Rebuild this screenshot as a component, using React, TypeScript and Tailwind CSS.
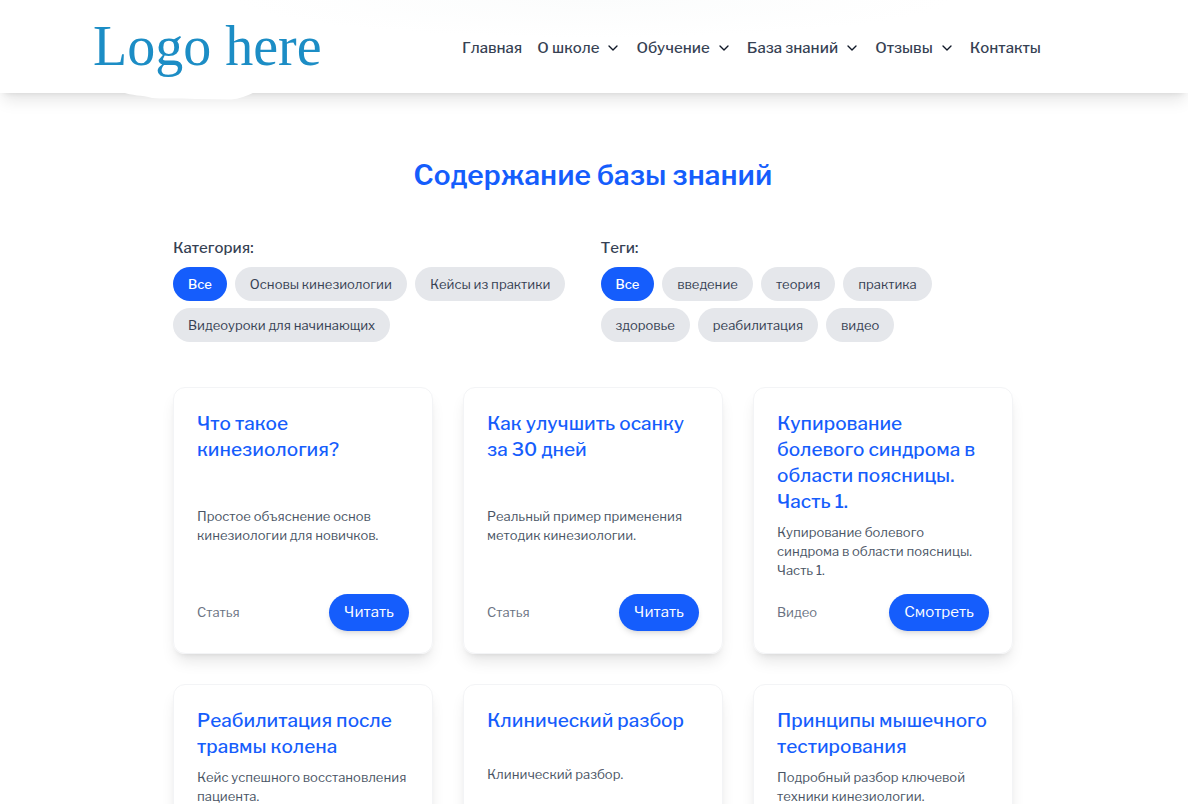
import React from "react";
import { ChevronDown } from "lucide-react";

const nav = [
  { label: "Главная", menu: false },
  { label: "О школе", menu: true },
  { label: "Обучение", menu: true },
  { label: "База знаний", menu: true },
  { label: "Отзывы", menu: true },
  { label: "Контакты", menu: false },
];

const categories = ["Все", "Основы кинезиологии", "Кейсы из практики", "Видеоуроки для начинающих"];
const tags = ["Все", "введение", "теория", "практика", "здоровье", "реабилитация", "видео"];

const cards = [
  { title: "Что такое кинезиология?", text: "Простое объяснение основ кинезиологии для новичков.", kind: "Статья", action: "Читать" },
  { title: "Как улучшить осанку за 30 дней", text: "Реальный пример применения методик кинезиологии.", kind: "Статья", action: "Читать" },
  { title: "Купирование болевого синдрома в области поясницы. Часть 1.", text: "Купирование болевого синдрома в области поясницы. Часть 1.", kind: "Видео", action: "Смотреть" },
  { title: "Реабилитация после травмы колена", text: "Кейс успешного восстановления пациента.", kind: "Статья", action: "Читать" },
  { title: "Клинический разбор", text: "Клинический разбор.", kind: "Видео", action: "Смотреть" },
  { title: "Принципы мышечного тестирования", text: "Подробный разбор ключевой техники кинезиологии.", kind: "Статья", action: "Читать" },
];

function Filter({ title, items }: { title: string; items: string[] }) {
  return (
    <div>
      <h2 className="mb-[7px] text-[15px] leading-6 font-medium text-gray-700">{title}</h2>
      <div className="flex flex-wrap gap-x-2 gap-y-[7px]">
        {items.map((item, i) => (
          <button
            key={item}
            className={
              i === 0
                ? "rounded-full bg-[#155dfc] px-[15px] py-[7px] text-[13px] leading-5 font-medium text-white"
                : "rounded-full bg-gray-200 px-[15px] py-[7px] text-[13px] leading-5 text-gray-700"
            }
          >
            {item}
          </button>
        ))}
      </div>
    </div>
  );
}

export default function App() {
  return (
    <div className="h-screen overflow-x-hidden overflow-y-auto bg-white font-['Libre_Franklin','Inter',sans-serif] [scrollbar-width:none]">
      <header className="relative flex h-[93px] items-center bg-white bg-[radial-gradient(ellipse_30%_40%_at_50%_0%,#fbfcfc,#ffffff)] pl-[93px] shadow-lg">
        <svg className="absolute top-[92px] left-[122px]" width="134" height="9" viewBox="0 0 134 9" aria-hidden="true">
          <path d="M0 0 C10 4 20 3 30 6 C38 7 55 6 74 7 L109 7.5 C117 7 125 4 133 0 Z" fill="#fff" />
        </svg>
        <a
          href="#"
          className="w-[369px] pb-[2px] font-['Liberation_Serif',serif] text-[56px] leading-none text-[#1c8dc5]"
        >
          Logo here
        </a>
        <nav className="flex gap-[15px] pt-[3px] text-[15px] font-medium text-gray-700">
          {nav.map((n) => (
            <a href="#" key={n.label} className="flex items-center gap-[6px]">
              {n.label}
              {n.menu && <ChevronDown size={16} className="text-gray-900" />}
            </a>
          ))}
        </nav>
      </header>
      <main className="mx-auto w-full max-w-[842px] pt-[60px] pr-[2px] pb-[60px]">
        <h1 className="text-center text-[28px] leading-[44px] font-semibold text-[#155dfc]">Содержание базы знаний</h1>
        <section className="mt-[39px] grid grid-cols-2 gap-[15px]">
          <Filter title="Категория:" items={categories} />
          <Filter title="Теги:" items={tags} />
        </section>
        <section className="mt-[45px] grid grid-cols-3 gap-[30px]">
          {cards.map((c) => (
            <article key={c.title} className="flex flex-col justify-between rounded-xl border border-gray-100 px-[23px] pt-[23px] pb-[22px] shadow-lg">
              <h3 className="mb-2 text-[19px] leading-[26px] font-medium text-[#155dfc]">{c.title}</h3>
              <p className="mb-[14px] text-[13px] leading-[19px] text-gray-600">{c.text}</p>
              <div className="flex items-center justify-between">
                <span className="text-[13px] text-gray-500">{c.kind}</span>
                <a href="#" className="rounded-full bg-[#155dfc] px-[15px] py-[7px] text-[15px] leading-[23px] text-white shadow-md">{c.action}</a>
              </div>
            </article>
          ))}
        </section>
      </main>
    </div>
  );
}
